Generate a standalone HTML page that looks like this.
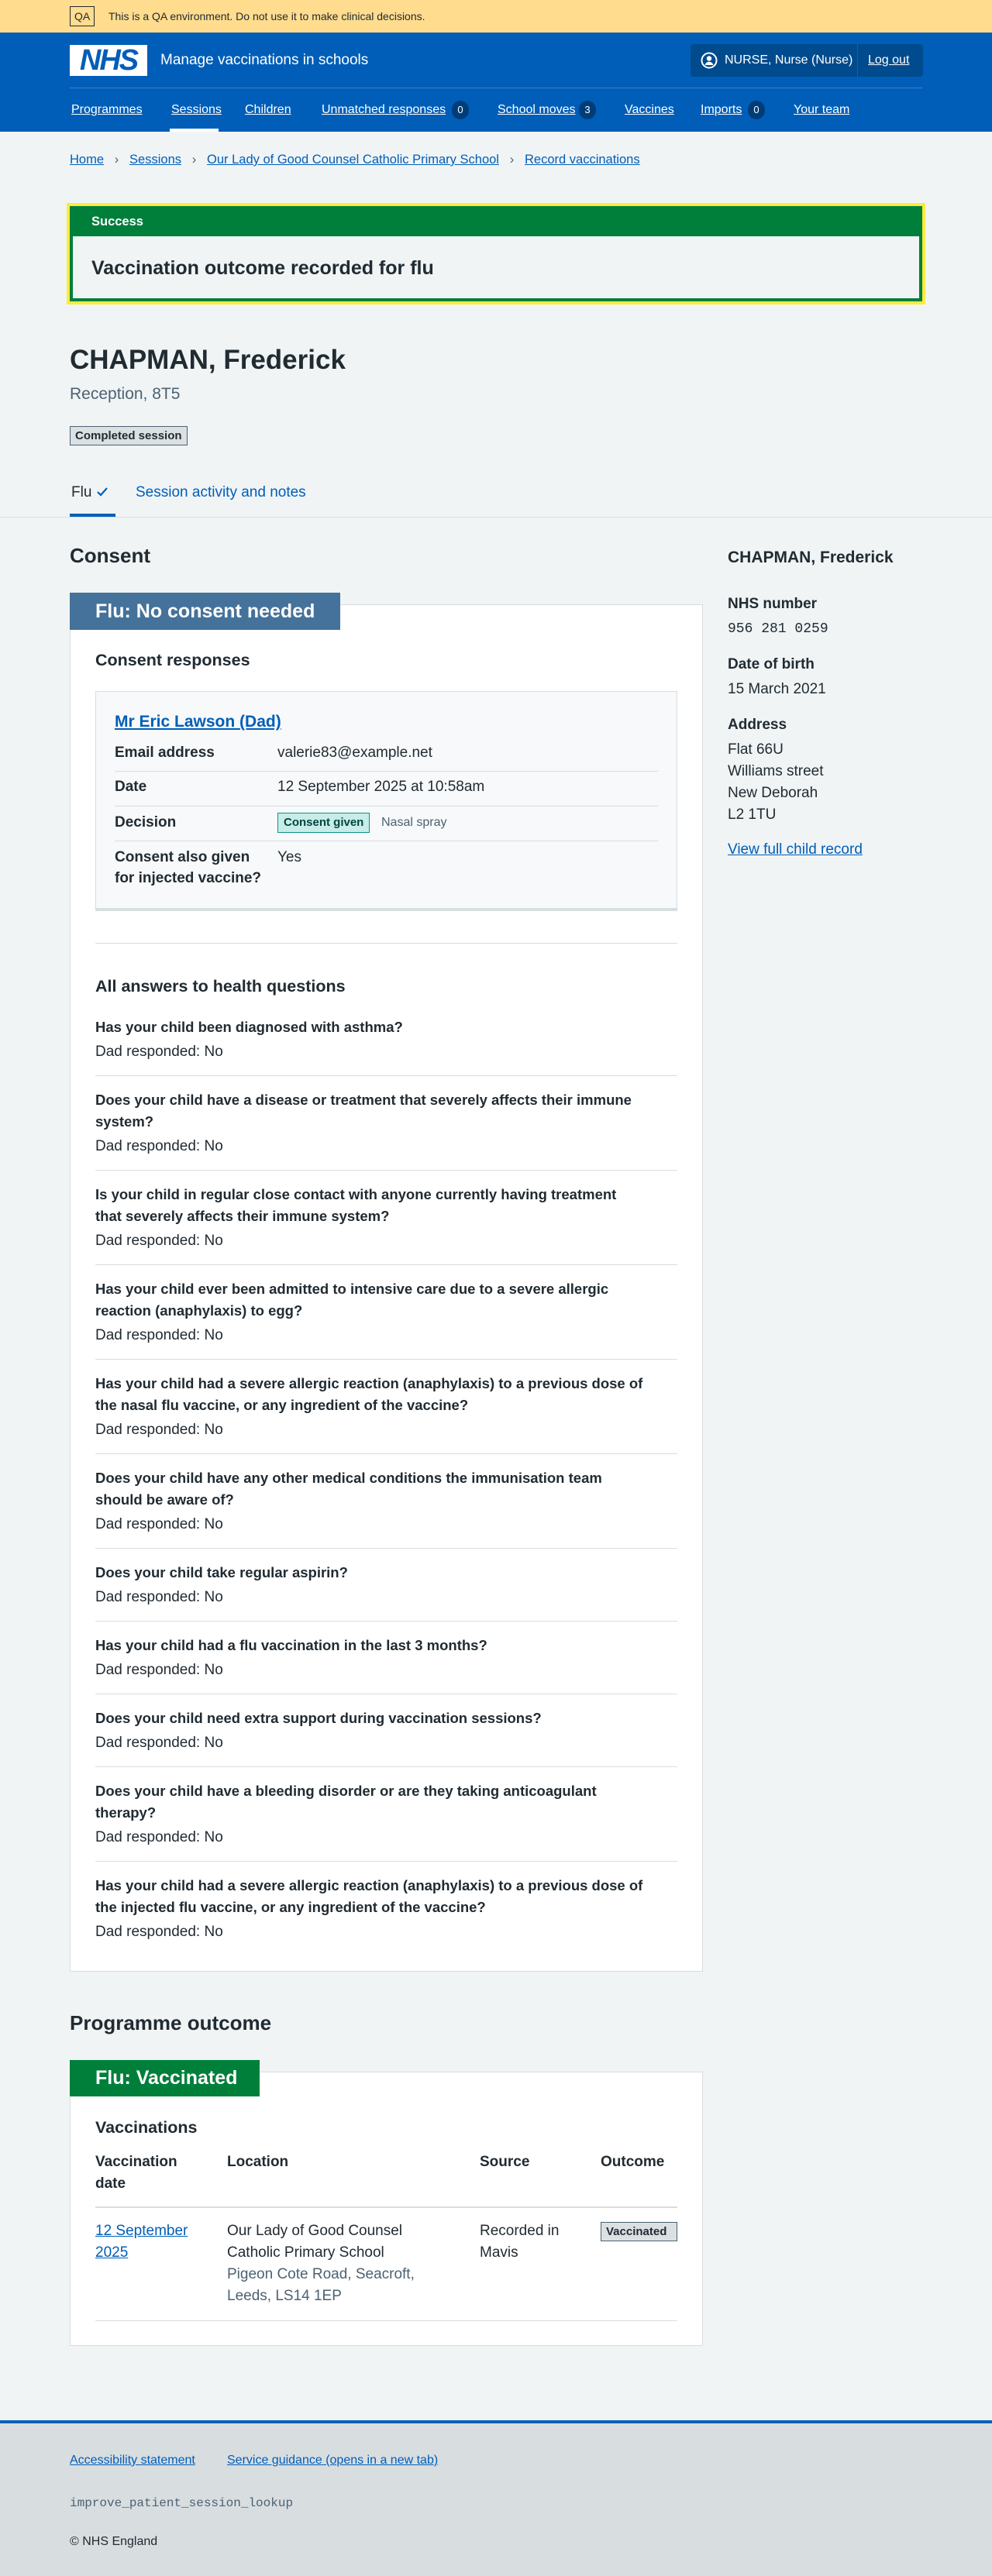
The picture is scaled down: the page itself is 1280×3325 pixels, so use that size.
<!DOCTYPE html>
<html><head><meta charset="utf-8">
<style>
*{box-sizing:border-box;margin:0;padding:0}
body{width:1280px;height:3325px;position:relative;background:#f0f4f5;font-family:"Liberation Sans",Arial,sans-serif;color:#212b32;font-size:19px;overflow:hidden}
.a{position:absolute;white-space:nowrap}
.lk{color:#005eb8;text-decoration:underline}
.b{font-weight:bold}
.w{color:#fff}
.nav{position:absolute;top:130px;line-height:24px;font-size:16px;color:#fff;text-decoration:underline;white-space:nowrap}
.badge{position:absolute;width:22px;height:24px;border-radius:12px;background:#003d78;color:#fff;font-size:13px;text-align:center;line-height:24px;top:130px}
.tag{position:absolute;border:1px solid #4c6272;background:#dbe0e3;color:#212b32;font-size:15px;font-weight:bold;padding:0 6px;white-space:nowrap}
.hr{position:absolute;height:1px;background:#d8dde0}
.q{font-weight:bold;line-height:28px;font-size:18.5px}
.qa{line-height:28px}
.qb{padding:17px 0 16px;border-bottom:1px solid #d8dde0}
</style></head><body>
<!-- QA banner -->
<div class="a" style="left:0;top:0;width:1280px;height:42px;background:#ffdc8e"></div>
<div class="a" style="left:90px;top:8px;height:26px;border:1px solid #212b32;padding:0 5px;line-height:24px;font-size:14px">QA</div>
<div class="a" style="left:140px;top:10px;line-height:22px;font-size:14px">This is a QA environment. Do not use it to make clinical decisions.</div>
<!-- header -->
<div class="a" style="left:0;top:42px;width:1280px;height:128px;background:#005eb8"></div>
<div class="a" style="left:90px;top:58px;width:100px;height:40px;background:#fff;color:#005eb8;font-weight:bold;font-style:italic;font-size:38px;line-height:40px;text-align:center;letter-spacing:-2px">NHS</div>
<div class="a w" style="left:207px;top:65px;font-size:19px;line-height:26px">Manage vaccinations in schools</div>
<div class="a" style="left:891px;top:57px;width:300px;height:42px;background:#004b8d;border-radius:4px"></div>
<div class="a" style="left:1106px;top:57px;width:1px;height:42px;background:#1a5ea0"></div>
<svg class="a" style="left:904px;top:67px" width="22" height="22" viewBox="0 0 22 22"><circle cx="11" cy="11" r="9.5" fill="none" stroke="#fff" stroke-width="2"/><circle cx="11" cy="8.5" r="3.2" fill="#fff"/><path d="M5.5 17c1-3 3-4.3 5.5-4.3s4.5 1.3 5.5 4.3" fill="#fff"/></svg>
<div class="a w" style="left:935px;top:66px;line-height:24px;font-size:16px">NURSE, Nurse (Nurse)</div>
<div class="a w" style="left:1120px;top:66px;line-height:24px;font-size:16px;text-decoration:underline">Log out</div>
<div class="a" style="left:90px;top:113px;width:1100px;height:1px;background:#3f7fc4"></div>
<div class="nav" style="left:92px">Programmes</div>
<div class="nav" style="left:221px">Sessions</div>
<div class="a" style="left:219px;top:166px;width:63px;height:4px;background:#fff"></div>
<div class="nav" style="left:316px">Children</div>
<div class="nav" style="left:415px">Unmatched responses</div>
<div class="badge" style="left:583px">0</div>
<div class="nav" style="left:642px">School moves</div>
<div class="badge" style="left:747px">3</div>
<div class="nav" style="left:806px">Vaccines</div>
<div class="nav" style="left:904px">Imports</div>
<div class="badge" style="left:965px">0</div>
<div class="nav" style="left:1024px">Your team</div>
<!-- breadcrumb -->
<div class="a" style="left:90px;top:194px;line-height:24px;font-size:16.5px;color:#005eb8"><span style="text-decoration:underline">Home</span>&nbsp;&nbsp;&nbsp;<span style="color:#4c6272">›</span>&nbsp;&nbsp;&nbsp;<span style="text-decoration:underline">Sessions</span>&nbsp;&nbsp;&nbsp;<span style="color:#4c6272">›</span>&nbsp;&nbsp;&nbsp;<span style="text-decoration:underline">Our Lady of Good Counsel Catholic Primary School</span>&nbsp;&nbsp;&nbsp;<span style="color:#4c6272">›</span>&nbsp;&nbsp;&nbsp;<span style="text-decoration:underline">Record vaccinations</span></div>
<!-- success -->
<div class="a" style="left:86px;top:262px;width:1108px;height:131px;border:4px solid #ffeb3b"></div>
<div class="a" style="left:90px;top:266px;width:1100px;height:123px;border:4px solid #007f3b;background:#f0f4f5"></div>
<div class="a" style="left:90px;top:266px;width:1100px;height:39px;background:#007f3b"></div>
<div class="a w b" style="left:118px;top:274px;line-height:24px;font-size:16.5px">Success</div>
<div class="a b" style="left:118px;top:330px;font-size:25px;line-height:32px">Vaccination outcome recorded for flu</div>
<!-- title -->
<div class="a b" style="left:90px;top:442px;font-size:35px;line-height:46px">CHAPMAN, Frederick</div>
<div class="a" style="left:90px;top:495px;font-size:21px;line-height:28px;color:#4c6272">Reception, 8T5</div>
<div class="tag" style="left:90px;top:550px;height:25px;line-height:23px">Completed session</div>
<!-- tabs -->
<div class="a" style="left:92px;top:623px;line-height:26px">Flu <svg width="16" height="14" viewBox="0 0 16 14" style="vertical-align:-1px"><path d="M2 7l4 4 8-9" fill="none" stroke="#005eb8" stroke-width="2.2"/></svg></div>
<div class="a" style="left:175px;top:623px;line-height:26px;color:#005eb8">Session activity and notes</div>
<div class="a" style="left:0;top:667px;width:1280px;height:1px;background:#d8dde0"></div>
<div class="a" style="left:90px;top:663px;width:59px;height:4px;background:#005eb8"></div>
<!-- consent -->
<div class="a b" style="left:90px;top:701px;font-size:26px;line-height:32px">Consent</div>
<div class="a" style="left:90px;top:780px;width:817px;height:1765px;background:#fff;border:1px solid #d8dde0"></div>
<div class="a w b" style="left:90px;top:765px;width:349px;height:48px;background:#44729a;font-size:25px;line-height:48px;padding-left:33px">Flu: No consent needed</div>
<div class="a b" style="left:123px;top:838px;font-size:21.5px;line-height:28px">Consent responses</div>
<div class="a" style="left:123px;top:892px;width:751px;height:284px;background:#f7f9fa;border:1px solid #d8dde0;border-bottom:4px solid #d8dde0"></div>
<div class="a b lk" style="left:148px;top:918px;font-size:21px;line-height:28px">Mr Eric Lawson (Dad)</div>
<div class="a b" style="left:148px;top:958px;line-height:28px">Email address</div>
<div class="a" style="left:358px;top:958px;line-height:28px">valerie83@example.net</div>
<div class="hr" style="left:148px;top:995px;width:701px"></div>
<div class="a b" style="left:148px;top:1002px;line-height:28px">Date</div>
<div class="a" style="left:358px;top:1002px;line-height:28px">12 September 2025 at 10:58am</div>
<div class="hr" style="left:148px;top:1040px;width:701px"></div>
<div class="a b" style="left:148px;top:1048px;line-height:28px">Decision</div>
<div class="a" style="left:358px;top:1049px;height:26px;border:1px solid #0d9488;background:#c8ece8;color:#00463f;font-size:15px;font-weight:bold;line-height:24px;padding:0 7px">Consent given</div>
<div class="a" style="left:492px;top:1050px;font-size:16px;line-height:24px;color:#4c6272">Nasal spray</div>
<div class="hr" style="left:148px;top:1085px;width:701px"></div>
<div class="a b" style="left:148px;top:1093px;line-height:27px">Consent also given<br>for injected vaccine?</div>
<div class="a" style="left:358px;top:1093px;line-height:27px">Yes</div>
<div class="hr" style="left:123px;top:1217px;width:751px"></div>
<div class="a b" style="left:123px;top:1259px;font-size:21.5px;line-height:28px">All answers to health questions</div>
<div class="a" style="left:123px;top:1295px;width:751px;white-space:nowrap">
<div class="qb"><div class="q">Has your child been diagnosed with asthma?</div><div class="qa" style="margin-top:4px">Dad responded: No</div></div>
<div class="qb"><div class="q">Does your child have a disease or treatment that severely affects their immune<br>system?</div><div class="qa" style="margin-top:4px">Dad responded: No</div></div>
<div class="qb"><div class="q">Is your child in regular close contact with anyone currently having treatment<br>that severely affects their immune system?</div><div class="qa" style="margin-top:4px">Dad responded: No</div></div>
<div class="qb"><div class="q">Has your child ever been admitted to intensive care due to a severe allergic<br>reaction (anaphylaxis) to egg?</div><div class="qa" style="margin-top:4px">Dad responded: No</div></div>
<div class="qb"><div class="q">Has your child had a severe allergic reaction (anaphylaxis) to a previous dose of<br>the nasal flu vaccine, or any ingredient of the vaccine?</div><div class="qa" style="margin-top:4px">Dad responded: No</div></div>
<div class="qb"><div class="q">Does your child have any other medical conditions the immunisation team<br>should be aware of?</div><div class="qa" style="margin-top:4px">Dad responded: No</div></div>
<div class="qb"><div class="q">Does your child take regular aspirin?</div><div class="qa" style="margin-top:4px">Dad responded: No</div></div>
<div class="qb"><div class="q">Has your child had a flu vaccination in the last 3 months?</div><div class="qa" style="margin-top:4px">Dad responded: No</div></div>
<div class="qb"><div class="q">Does your child need extra support during vaccination sessions?</div><div class="qa" style="margin-top:4px">Dad responded: No</div></div>
<div class="qb"><div class="q">Does your child have a bleeding disorder or are they taking anticoagulant<br>therapy?</div><div class="qa" style="margin-top:4px">Dad responded: No</div></div>
<div class="qb" style="border-bottom:0"><div class="q">Has your child had a severe allergic reaction (anaphylaxis) to a previous dose of<br>the injected flu vaccine, or any ingredient of the vaccine?</div><div class="qa" style="margin-top:4px">Dad responded: No</div></div>
</div>
<!-- right column -->
<div class="a b" style="left:939px;top:706px;font-size:21px;line-height:28px">CHAPMAN, Frederick</div>
<div class="a b" style="left:939px;top:766px;line-height:28px">NHS number</div>
<div class="a" style="left:939px;top:798px;line-height:28px;font-family:'Liberation Mono',monospace;font-size:18px">956 281 0259</div>
<div class="a b" style="left:939px;top:844px;line-height:28px">Date of birth</div>
<div class="a" style="left:939px;top:876px;line-height:28px">15 March 2021</div>
<div class="a b" style="left:939px;top:922px;line-height:28px">Address</div>
<div class="a" style="left:939px;top:954px;line-height:28px">Flat 66U<br>Williams street<br>New Deborah<br>L2 1TU</div>
<div class="a lk" style="left:939px;top:1083px;line-height:28px">View full child record</div>
<!-- programme outcome -->
<div class="a b" style="left:90px;top:2595px;font-size:26px;line-height:32px">Programme outcome</div>
<div class="a" style="left:90px;top:2674px;width:817px;height:354px;background:#fff;border:1px solid #d8dde0"></div>
<div class="a w b" style="left:90px;top:2659px;width:245px;height:47px;background:#007f3b;font-size:25px;line-height:47px;padding-left:33px">Flu: Vaccinated</div>
<div class="a b" style="left:123px;top:2732px;font-size:21.5px;line-height:28px">Vaccinations</div>
<div class="a b" style="left:123px;top:2777px;line-height:28px">Vaccination<br>date</div>
<div class="a b" style="left:293px;top:2777px;line-height:28px">Location</div>
<div class="a b" style="left:619px;top:2777px;line-height:28px">Source</div>
<div class="a b" style="left:775px;top:2777px;line-height:28px">Outcome</div>
<div class="hr" style="left:123px;top:2848px;width:751px;height:2px"></div>
<div class="a lk" style="left:123px;top:2866px;line-height:28px">12 September<br>2025</div>
<div class="a" style="left:293px;top:2866px;line-height:28px">Our Lady of Good Counsel<br>Catholic Primary School<br><span style="color:#4c6272">Pigeon Cote Road, Seacroft,<br>Leeds, LS14 1EP</span></div>
<div class="a" style="left:619px;top:2866px;line-height:28px">Recorded in<br>Mavis</div>
<div class="tag" style="left:775px;top:2868px;height:25px;line-height:23px;width:99px">Vaccinated</div>
<div class="hr" style="left:123px;top:2995px;width:751px"></div>
<!-- footer -->
<div class="a" style="left:0;top:3124px;width:1280px;height:201px;background:#d8dde0;border-top:4px solid #005eb8"></div>
<div class="a lk" style="left:90px;top:3164px;font-size:16px;line-height:24px">Accessibility statement</div>
<div class="a lk" style="left:293px;top:3164px;font-size:16px;line-height:24px">Service guidance (opens in a new tab)</div>
<div class="a" style="left:90px;top:3220px;font-family:'Liberation Mono',monospace;font-size:16px;line-height:22px;color:#4c6272">improve_patient_session_lookup</div>
<div class="a" style="left:90px;top:3270px;font-size:16px;line-height:22px">© NHS England</div>
</body></html>
